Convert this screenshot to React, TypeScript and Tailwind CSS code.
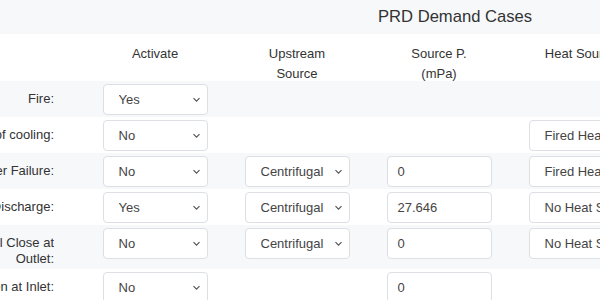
import React from "react";

type Cell =
  | { kind: "select"; value: string }
  | { kind: "input"; value: string }
  | null;

type RowData = { label: string[]; cells: Cell[] };

const sel = (value: string): Cell => ({ kind: "select", value });
const inp = (value: string): Cell => ({ kind: "input", value });

const rows: RowData[] = [
  { label: ["Fire:"], cells: [sel("Yes"), null, null, null] },
  { label: ["Loss of cooling:"], cells: [sel("No"), null, null, sel("Fired Heater")] },
  { label: ["Power Failure:"], cells: [sel("No"), sel("Centrifugal"), inp("0"), sel("Fired Heater")] },
  { label: ["Blocked Discharge:"], cells: [sel("Yes"), sel("Centrifugal"), inp("27.646"), sel("No Heat Source")] },
  {
    label: ["Control Valve Fail Close at", "Outlet:"],
    cells: [sel("No"), sel("Centrifugal"), inp("0"), sel("No Heat Source")],
  },
  { label: ["Control Valve Fail Open at Inlet:"], cells: [sel("No"), null, inp("0"), null] },
];

function Chevron() {
  return (
    <svg width="9" height="6" viewBox="0 0 9 6" className="shrink-0">
      <polyline points="1.5,1.2 4.5,4.2 7.5,1.2" fill="none" stroke="#555" strokeWidth="1.2" />
    </svg>
  );
}

function Control({ cell }: { cell: Cell }) {
  if (!cell) return null;
  if (cell.kind === "select") {
    return (
      <div className="w-[105px] h-[31px] shrink-0 border border-[#dcdfe3] rounded-[4px] bg-white flex items-center pl-[15px] pr-[6px] overflow-hidden">
        <span className="flex-1 whitespace-nowrap overflow-hidden text-[13px] text-[#444]">{cell.value}</span>
        <Chevron />
      </div>
    );
  }
  return (
    <div className="w-[105px] h-[31px] shrink-0 border border-[#dcdfe3] rounded-[4px] bg-white flex items-center pl-[10px]">
      <span className="text-[13px] text-[#444] whitespace-nowrap">{cell.value}</span>
    </div>
  );
}

export default function App() {
  return (
    <div
      className="w-[600px] h-[300px] overflow-hidden bg-white"
      style={{ fontFamily: '"Liberation Sans", Arial, sans-serif' }}
    >
      <div className="h-[34px] bg-[#f6f8fa] flex items-center pl-[378px]">
        <span className="text-[16.6px] leading-[20px] text-[#333] whitespace-nowrap">PRD Demand Cases</span>
      </div>
      <div className="h-[47px] bg-white flex items-start pt-[10px] overflow-hidden">
        <div className="w-[84px] shrink-0" />
        {[["Activate"], ["Upstream", "Source"], ["Source P.", "(mPa)"], ["Heat Source"]].map((h, i) => (
          <div
            key={i}
            className="w-[142px] shrink-0 flex flex-col items-center text-[13px] leading-[19.5px] text-[#333] whitespace-nowrap"
          >
            {h.map((l, j) => (
              <span key={j}>{l}</span>
            ))}
          </div>
        ))}
      </div>
      {rows.map((r, i) => (
        <div
          key={i}
          className={
            i % 2 === 0
              ? "flex items-start min-h-[36px] bg-[#f6f8fa]"
              : "flex items-start min-h-[36px] bg-white"
          }
        >
          <div className="w-[84px] shrink-0 pr-[30px] pt-[10px] pb-[2px]">
            <div className="w-[54px] overflow-hidden flex flex-col items-end text-[13px] leading-[16px] text-[#333] whitespace-nowrap">
              {r.label.map((l, j) => (
                <span key={j}>{l}</span>
              ))}
            </div>
          </div>
          {r.cells.map((c, j) => (
            <div key={j} className="w-[142px] shrink-0 flex justify-center pt-[3px] pb-[2px]">
              <Control cell={c} />
            </div>
          ))}
        </div>
      ))}
    </div>
  );
}
